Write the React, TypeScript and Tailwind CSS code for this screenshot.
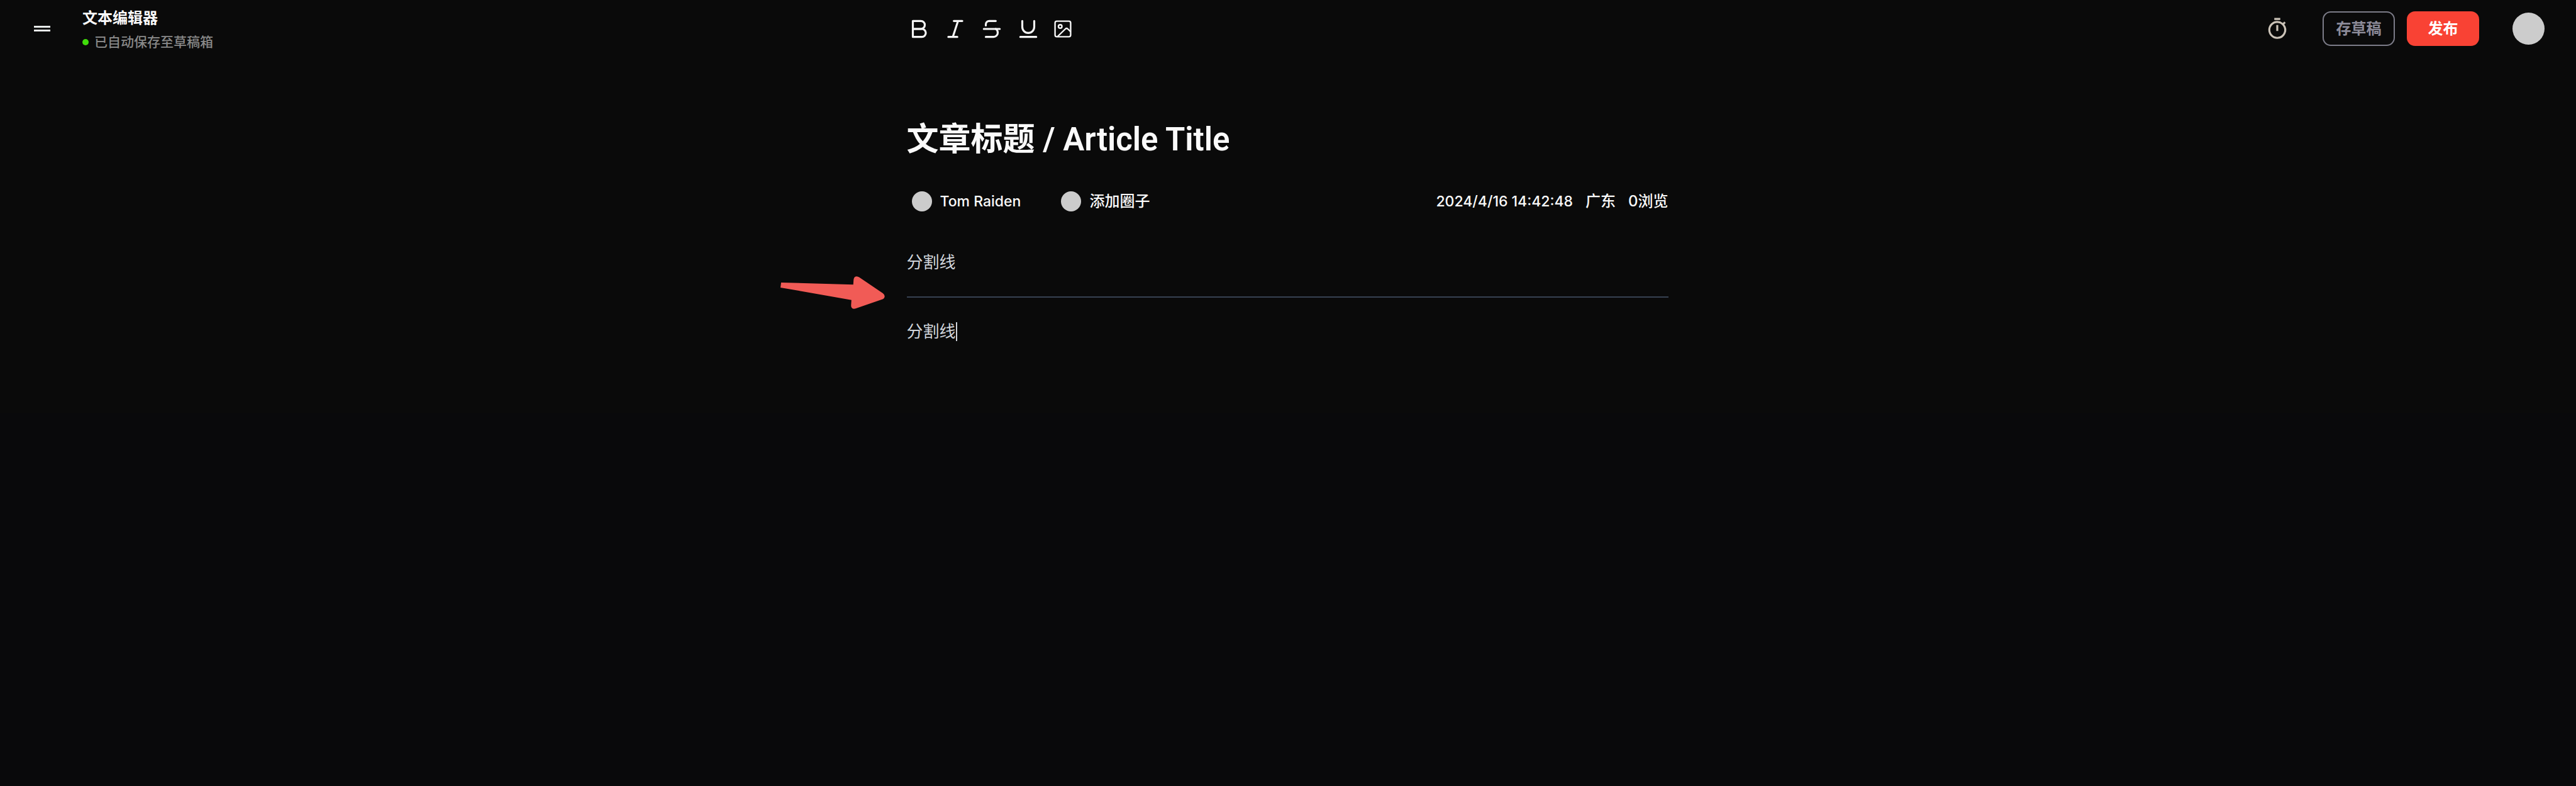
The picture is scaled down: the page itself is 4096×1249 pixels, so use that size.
import React from "react";

type IconProps = { children: React.ReactNode };

function StrokeIcon({ children }: IconProps) {
  return (
    <svg
      viewBox="0 0 48 48"
      className="size-[38px]"
      fill="none"
      stroke="currentColor"
      strokeWidth="4"
      strokeLinecap="round"
      strokeLinejoin="round"
      aria-hidden="true"
    >
      {children}
    </svg>
  );
}

const tools = [
  {
    label: "加粗",
    icon: (
      <StrokeIcon>
        <path d="M12 8h16a8 8 0 0 1 0 16H12z" />
        <path d="M12 24h18a8 8 0 0 1 0 16H12z" />
      </StrokeIcon>
    ),
  },
  {
    label: "斜体",
    icon: (
      <StrokeIcon>
        <path d="M21 8h17M10 40h18M29.5 8 19 40" />
      </StrokeIcon>
    ),
  },
  {
    label: "删除线",
    icon: (
      <StrokeIcon>
        <path d="M8 24h32" />
        <path d="M32 8H19a7 7 0 0 0-7 7v2" />
        <path d="M32 24c2.5 1.500 4 4 4 7.500a8.500 8.500 0 0 1-8.500 8.500H12" />
      </StrokeIcon>
    ),
  },
  {
    label: "下划线",
    icon: (
      <StrokeIcon>
        <path d="M12 8v12a12 12 0 0 0 24 0V8" />
        <path d="M8 40h32" />
      </StrokeIcon>
    ),
  },
  {
    label: "图片",
    icon: (
      <svg
        viewBox="0 0 40 40"
        className="size-8"
        fill="none"
        stroke="currentColor"
        strokeWidth="3"
        strokeLinejoin="round"
        aria-hidden="true"
      >
        <rect x="4.500" y="4.500" width="31" height="31" rx="3.500" />
        <circle cx="14.700" cy="15" r="3.500" />
        <path d="M9.500 35 25 20q2.300-2.200 4.800 0L35.500 25.500" />
      </svg>
    ),
  },
];

function Header() {
  return (
    <header className="grid h-[91px] grid-cols-[1fr_1211px_1fr] items-center pr-0.5">
      <div className="flex items-center gap-[51px] pl-[54px]">
        <button type="button" aria-label="菜单" className="flex w-[26px] flex-col gap-[3px]">
          <span className="h-[3px] w-full bg-[#e8ebea]" />
          <span className="h-[3px] w-full bg-[#e8ebea]" />
        </button>
        <div className="flex flex-col gap-2 pt-1">
          <h1 className="text-[24px] leading-[30px] font-bold">文本编辑器</h1>
          <p className="flex items-center gap-[9px] text-[21px] leading-[30px] font-medium text-[#888888]">
            <span className="size-2.5 rounded-full bg-[#40dc0a]" />
            已自动保存至草稿箱
          </p>
        </div>
      </div>

      <div className="flex items-center gap-5 text-[#f5f5f5]" role="toolbar" aria-label="格式">
        {tools.map((t) => (
          <button key={t.label} type="button" aria-label={t.label}>
            {t.icon}
          </button>
        ))}
      </div>

      <div className="flex items-center justify-end gap-[53px] pr-12">
        <button type="button" aria-label="定时发布" className="text-[#cbc3b8]">
          <svg viewBox="0 0 24 24" className="size-[38px]" fill="currentColor" aria-hidden="true">
            <path d="M15 1H9v2h6V1zm-4 13h2V8h-2v6zm8.030-6.610l1.420-1.420c-.43-.51-.9-.99-1.410-1.410l-1.420 1.420A8.962 8.962 0 0 0 12 4c-4.970 0-9 4.030-9 9s4.020 9 9 9a8.994 8.994 0 0 0 7.030-14.610zM12 20c-3.870 0-7-3.130-7-7s3.130-7 7-7 7 3.130 7 7-3.130 7-7 7z" />
          </svg>
        </button>
        <div className="flex gap-[19px]">
          <button
            type="button"
            className="h-[55px] w-[115px] rounded-[13px] border-2 border-[#7c7c88] text-[24px] font-bold text-[#8c8b99]"
          >
            存草稿
          </button>
          <button
            type="button"
            className="h-[55px] w-[115px] rounded-[13px] bg-[#f94234] text-[24px] font-bold text-white"
          >
            发布
          </button>
        </div>
        <button type="button" aria-label="用户" className="size-[51px] rounded-full bg-[#cccccc]" />
      </div>
    </header>
  );
}

function Chip({ children }: { children: React.ReactNode }) {
  return (
    <button type="button" className="flex items-center gap-[13px]">
      <span className="size-8 rounded-full bg-[#cccccc]" />
      {children}
    </button>
  );
}

export default function App() {
  return (
    <div
      lang="zh-CN"
      className="min-h-screen bg-[#09090b] font-['Inter','Noto_Sans_CJK_SC',sans-serif] text-[#fafafa]"
    >
      <div className="bg-[#0a0a0a]">
        <Header />
        <main className="flex justify-center pt-[100px] pr-0.5 pb-[109px]">
          <article className="relative w-[1211px]">
            <input
              aria-label="标题"
              defaultValue="文章标题 / Article Title"
              className="block h-[62px] w-full bg-transparent font-['Roboto','Noto_Sans_CJK_SC',sans-serif] text-[51px] font-semibold outline-none"
            />

            <div className="mt-[51px] flex h-8 items-center justify-between text-[24px] font-medium">
              <div className="flex gap-16 pl-2">
                <Chip>
                  <span className="text-[23px]">Tom Raiden</span>
                </Chip>
                <Chip>添加圈子</Chip>
              </div>
              <div className="flex items-center gap-5">
                <time className="text-[23px]">2024/4/16 14:42:48</time>
                <span>广东</span>
                <span>0浏览</span>
              </div>
            </div>

            <div
              role="textbox"
              aria-label="正文"
              aria-multiline="true"
              contentEditable
              suppressContentEditableWarning
              className="mt-[60px] text-[26px] leading-[42px] text-[#d1d5db] outline-none"
            >
              <p>分割线</p>
              <hr className="my-[33px] border-t-2 border-[#374151]" />
              <p className="flex items-center">
                分割线
                <span className="h-[30px] w-0.5 bg-[#d1d5db]" />
              </p>
            </div>

            <svg
              viewBox="88 205 621 195"
              className="pointer-events-none absolute top-[248px] left-[-201px] w-[166px]"
              fill="#f15b56"
              aria-hidden="true"
            >
              <path d="M92 242 521 255 523 226Q525 206 542 206 549 207 556 211L697 306Q708 314 708 324 707 337 695 342L535 397Q523 400 515 396 507 391 508 377L510 346 88 272Z" />
            </svg>
          </article>
        </main>
      </div>
    </div>
  );
}
